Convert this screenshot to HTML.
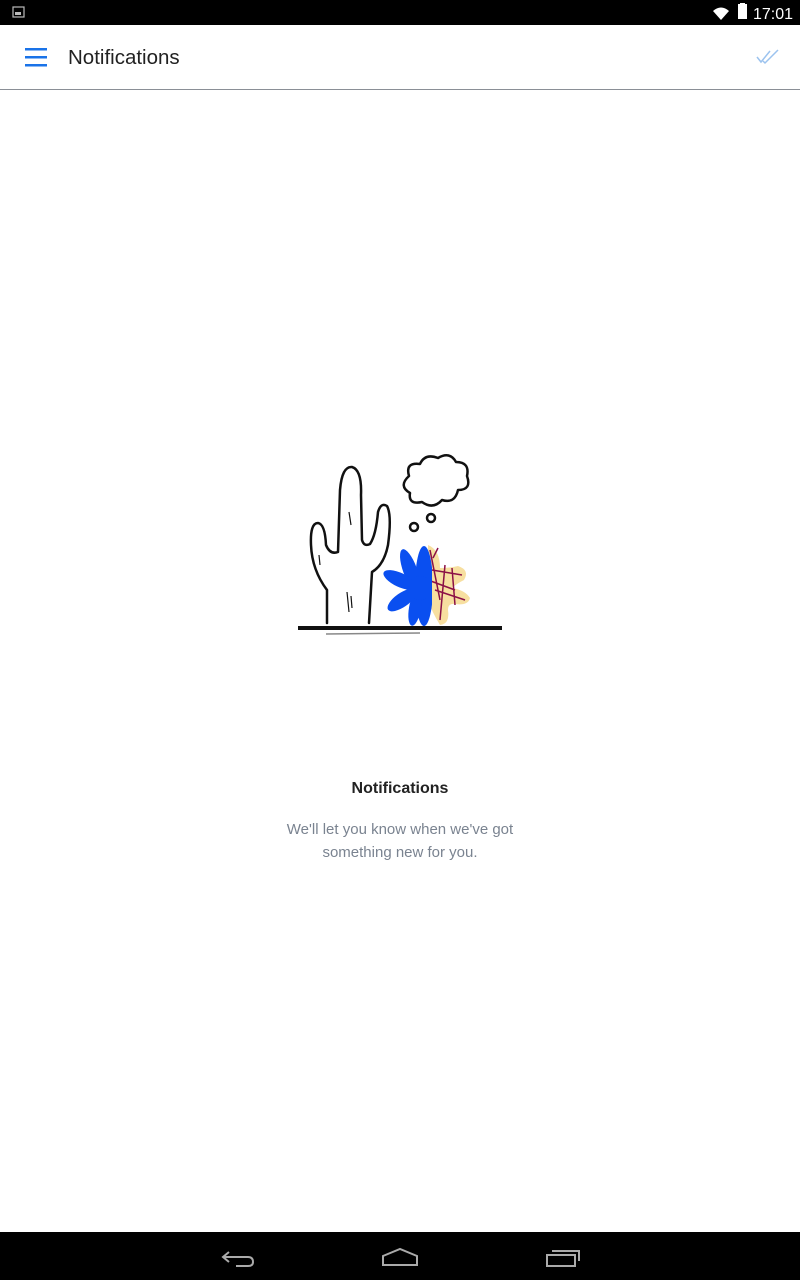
<!DOCTYPE html>
<html><head><meta charset="utf-8"><style>
html,body{margin:0;padding:0;width:800px;height:1280px;overflow:hidden;background:#fff;font-family:"Liberation Sans",Roboto,sans-serif;position:relative}
.sb{position:absolute;left:0;top:0;width:800px;height:25px;background:#000}
.hd{position:absolute;left:0;top:25px;width:800px;height:64px;background:#fff;border-bottom:1px solid #8a8f96}
.title{position:absolute;left:68px;top:46px;font-size:20.5px;color:#222}
.nb{position:absolute;left:0;top:1232px;width:800px;height:48px;background:#000}
.h{position:absolute;left:0;width:800px;text-align:center}
</style></head><body>
<div class="sb">
<svg width="800" height="25" style="position:absolute;left:0;top:0">
<rect x="13" y="7" width="11" height="10" fill="none" stroke="#bbb" stroke-width="1.2"/>
<rect x="15" y="12" width="6" height="3" fill="#bbb"/>
<path d="M713 11 Q721 4 729 11 L721 20 Z" fill="#fff"/>
<rect x="738" y="4" width="9" height="15" fill="#fff"/>
<rect x="740" y="3" width="5" height="2" fill="#fff"/>
<text x="753" y="19" fill="#fff" font-size="16" font-family="Liberation Sans">17:01</text>
</svg>
</div>
<div class="hd"></div>
<svg width="800" height="90" style="position:absolute;left:0;top:0">
<rect x="25" y="48" width="22" height="2.5" fill="#1a73e8"/>
<rect x="25" y="56" width="22" height="2.5" fill="#1a73e8"/>
<rect x="25" y="64" width="22" height="2.5" fill="#1a73e8"/>
<path d="M757 57 L761 62 L770 51 M763 61 L765 63 L778 50" fill="none" stroke="#9cc3ef" stroke-width="1.5"/>
</svg>
<div class="title">Notifications</div>

<svg width="800" height="1280" style="position:absolute;left:0;top:0">
<defs><clipPath id="c"><rect x="380" y="540" width="52" height="90"/></clipPath></defs>
<g fill="none" stroke="#111" stroke-width="2.5" stroke-linecap="round" stroke-linejoin="round">
<path d="M327 623 L327 590 Q312 570 311 545 Q310 523 318 523 Q325 524 326 545 Q330 555 338 552 L340 490 Q342 466 352 467 Q362 470 361 495 L362 540 Q364 547 370 544 Q376 535 378 512 Q381 502 387 506 Q392 515 388 545 Q384 565 372 572 L369 623"/>
<path d="M409 476 Q405 462 420 464 Q425 453 438 458 Q450 451 456 462 Q470 462 467 476 Q472 490 458 490 Q455 504 442 500 Q433 510 422 502 Q408 505 410 493 Q398 486 409 476 Z"/>
<circle cx="414" cy="527" r="4"/>
<circle cx="431" cy="518" r="4"/>
</g>
<g stroke="#111" stroke-width="1.2">
<path d="M349 512 L351 525 M347 592 L349 612 M351 596 L352 608 M319 555 L320 565"/>
</g>
<path d="M428 545 Q440 550 440 568 Q450 568 458 566 Q470 570 464 580 Q456 584 452 588 Q465 590 470 598 Q468 606 455 604 Q448 603 448 610 Q450 624 440 625 Q432 612 428 600 Z" fill="#f7dfa0"/>
<g stroke="#8b1046" stroke-width="1.5" fill="none">
<path d="M430 550 L440 600 M432 570 L462 575 M435 590 L465 600 M445 565 L440 620 M452 568 L455 605 M428 580 L455 590 M433 558 L438 548"/>
</g>
<g fill="#0a4ff0" clip-path="url(#c)">
<ellipse cx="424" cy="586" rx="9" ry="40"/>
<ellipse cx="410" cy="570" rx="7" ry="22" transform="rotate(-20 410 570)"/>
<ellipse cx="400" cy="580" rx="18" ry="7" transform="rotate(25 400 580)"/>
<ellipse cx="402" cy="600" rx="17" ry="7" transform="rotate(-35 402 600)"/>
<ellipse cx="415" cy="608" rx="6" ry="18" transform="rotate(10 415 608)"/>
<circle cx="420" cy="588" r="12"/>
</g>
<path d="M298 628 L502 628" stroke="#111" stroke-width="4"/>
<path d="M326 634 L420 633" stroke="#888" stroke-width="1.5"/>
</svg>

<div class="h" style="top:780px;font-size:16px;font-weight:bold;color:#222">Notifications</div>
<div class="h" style="top:818px;font-size:15px;line-height:23px;color:#7a8390">We'll let you know when we've got<br>something new for you.</div>

<div class="nb">
<svg width="800" height="48" style="position:absolute;left:0;top:0">
<g fill="none" stroke="#aaa" stroke-width="2">
<path d="M229 20 L223 25 L229 30 M223 25 L248 25 Q253 25 253 30 Q253 34 248 34 L236 34"/>
<path d="M383 33 L383 24 L400 17 L417 24 L417 33 Z"/>
<rect x="547" y="23" width="28" height="11"/>
<path d="M552 19 L579 19 L579 29"/>
</g>
</svg>
</div>
</body></html>
